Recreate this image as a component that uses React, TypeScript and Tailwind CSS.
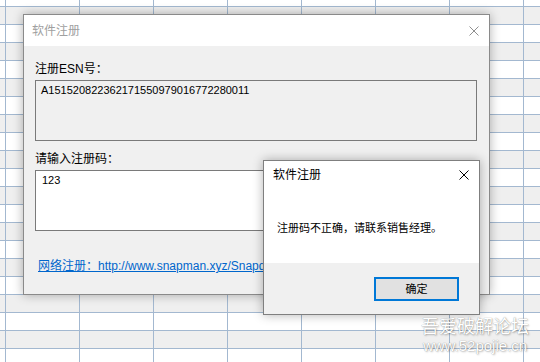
import React from 'react';

const rows = Array.from({ length: 22 }, (_, i) => i);
const cols = Array.from({ length: 9 }, (_, i) => i);

function CloseIcon({ color }: { color: string }) {
  return (
    <svg width="10" height="10" viewBox="0 0 10 10" className="block">
      <path d="M0.5 0.5 L9.5 9.5 M9.5 0.5 L0.5 9.5" stroke={color} strokeWidth="1" fill="none" />
    </svg>
  );
}

// spreadsheet behind the dialogs
function Sheet() {
  return (
    <div className="flex flex-col mt-[-12px] ml-[-69px]">
      {rows.map((r) => (
        <div
          key={r}
          className={`flex h-[18px] shrink-0 border-t border-[#a3b8d0] ${r % 2 === 1 ? 'bg-[#efefef]' : 'bg-white'}`}
        >
          {cols.map((c) => (
            <div key={c} className="w-[74px] shrink-0 border-l border-[#a3b8d0]" />
          ))}
        </div>
      ))}
    </div>
  );
}

export default function App() {
  return (
    <div className="relative w-[540px] h-[362px] overflow-hidden bg-white font-['Liberation_Sans','Noto_Sans_CJK_SC',sans-serif] text-black">
      <Sheet />

      {/* Main registration window */}
      <div className="absolute left-[23px] top-[14px] w-[467px] h-[281px] flex flex-col border border-[#8a8a8a] bg-[#f0f0f0] shadow-[0_0_10px_rgba(0,0,0,0.3)]">
        <div className="h-[31px] shrink-0 bg-white flex items-center justify-between pl-[8px] pr-[10px]">
          <span className="text-[12px] leading-[16px] text-[#a0a0a0]">软件注册</span>
          <CloseIcon color="#8f8f8f" />
        </div>
        <div className="flex flex-col px-[11px] pt-[15px]">
          <div className="text-[12px] leading-[16px]">注册ESN号：</div>
          <div className="mt-[3px] h-[61px] w-[442px] border border-[#7a7a7a] bg-[#f0f0f0] pl-[5px] pt-[1px] text-[11px] leading-[16px]">
            A151520822362171550979016772280011
          </div>
          <div className="mt-[10px] text-[12px] leading-[16px]">请输入注册码：</div>
          <div className="mt-[3px] h-[61px] w-[442px] border border-[#7a7a7a] bg-white pl-[6px] pt-[1px] text-[11px] leading-[16px]">
            123
          </div>
          <div className="mt-[27px] ml-[3px] whitespace-nowrap text-[12px] leading-[16px] text-[#0066cc] underline">
            网络注册：http://www.snapman.xyz/Snapde/register.html
          </div>
        </div>
      </div>

      {/* Error message box */}
      <div className="absolute left-[263px] top-[160px] w-[217px] h-[155px] flex flex-col border border-[#7f7f7f] bg-white shadow-[0_0_10px_rgba(0,0,0,0.3)]">
        <div className="h-[28px] shrink-0 flex items-center justify-between pl-[9px] pr-[10px]">
          <span className="text-[12px] leading-[16px]">软件注册</span>
          <CloseIcon color="#000000" />
        </div>
        <div className="h-[74px] shrink-0 pl-[13px] pt-[31px] text-[11px] leading-[16px] whitespace-nowrap">
          注册码不正确，请联系销售经理。
        </div>
        <div className="flex-1 bg-[#f0f0f0] flex justify-end items-start pt-[14px] pr-[20px]">
          <button className="w-[85px] h-[24px] border-2 border-[#0078d7] bg-[#e1e1e1] text-[11px] leading-[16px] flex items-center justify-center">
            确定
          </button>
        </div>
      </div>

      {/* watermark */}
      <div className="absolute left-[421px] top-[314px] flex flex-col items-center text-white [text-shadow:0_0_1px_rgba(0,0,0,0.45),1px_1px_2px_rgba(0,0,0,0.25)]">
        <span className="text-[18px] leading-[22px] font-['Noto_Sans_CJK_SC',sans-serif]">吾爱破解论坛</span>
        <span className="text-[15px] leading-[20px]">www.52pojie.cn</span>
      </div>
    </div>
  );
}
